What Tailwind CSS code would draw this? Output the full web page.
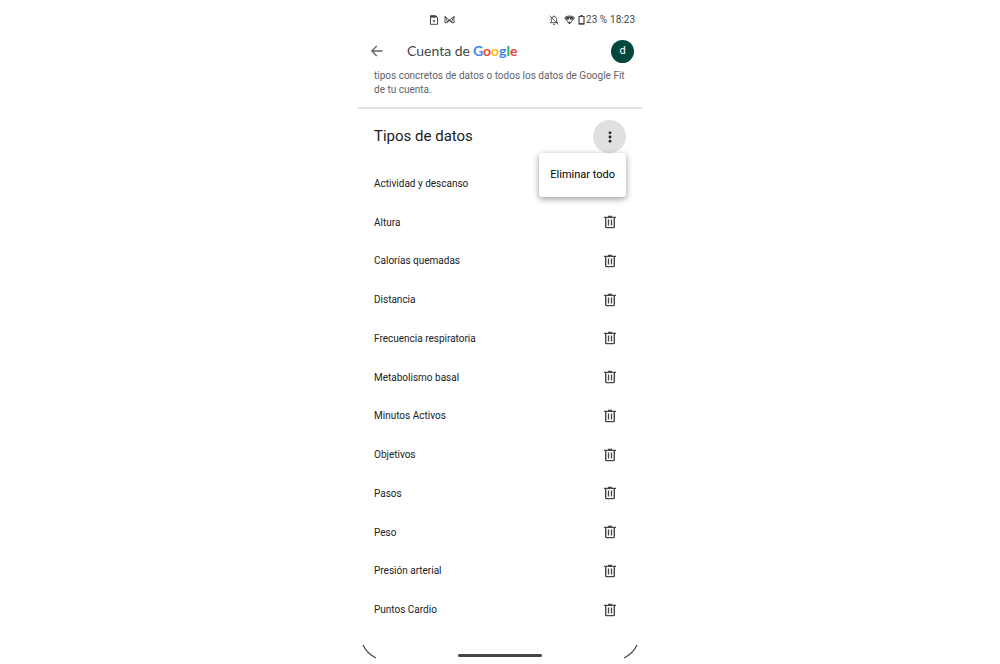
<!DOCTYPE html>
<html lang="es">
<head>
    <meta charset="UTF-8">
    <meta name="viewport" content="width=device-width, initial-scale=1.0">
    <title>Cuenta de Google - Tipos de datos</title>
    <script src="https://cdn.jsdelivr.net/npm/@tailwindcss/browser@4"></script>
</head>
<body class="bg-white font-['Roboto',sans-serif] text-[#202124]">
    <svg class="hidden">
        <symbol id="trash" viewBox="0 0 14 14">
            <path d="M1 2.400h12M5 1.500h4M2.700 2.800v9q0 .8.800.8h7q.8 0 .8-.8v-9" fill="none" stroke="currentColor" stroke-width="1.400"/>
            <path d="M5.500 4.600v6M8.500 4.600v6" fill="none" stroke="currentColor" stroke-width="1.300"/>
        </symbol>
    </svg>

    <div class="flex flex-col w-full max-w-[284px] min-h-screen mx-auto">
        <!-- Status bar -->
        <div class="flex items-center justify-between h-9 pt-1 pl-[71px] pr-[7px] text-[#444746]">
            <div class="flex items-center gap-[5px]">
                <svg class="w-[10px] h-[10px]" viewBox="0 0 10 10" fill="none" stroke="currentColor">
                    <path d="M1.500 .7H6.600L8.500 2.400V9.300H1.500z"/>
                    <path d="M1.500 1.800h6" stroke-width="1.800"/>
                    <path d="M5 4.800v2.400M3.800 6h2.400" stroke-width="1"/>
                </svg>
                <svg class="w-[11px] h-[10px]" viewBox="0 0 11 10" fill="none" stroke="currentColor" stroke-width=".9">
                    <path d="M1 1.500v6.500l2.500-1.500 2-1.800 2 1.800L10 8V1.500L5.500 5.200z"/>
                    <path d="M1 1.500l2.500 5M10 1.500L7.500 6.500M2.500 8L5.500 6l3 2"/>
                </svg>
            </div>
            <div class="flex items-center text-[10px] leading-4">
                <svg class="w-[10px] h-[10px] mr-[5px]" viewBox="0 0 10 10" fill="none" stroke="currentColor" stroke-width=".9">
                    <path d="M2.300 7.500V4.200C2.300 2.600 3.500 1.600 5 1.600s2.700 1 2.700 2.600v3.300M1 7.700h8M5 .5v1M4 9.300h2M.7.700l8.600 8.600"/>
                </svg>
                <svg class="w-[11px] h-[10px] mr-[3px]" viewBox="0 0 11 10">
                    <path d="M.5 2.800C3.300.4 7.700.4 10.500 2.800L5.500 9z" fill="none" stroke="currentColor" stroke-width=".9"/>
                    <path d="M1 2.800C3.500 1 7.500 1 10 2.800L8.500 4.800H2.500z" fill="currentColor"/>
                    <path d="M5.500 3v3M4.200 4.900l1.300 1.300 1.300-1.300" fill="none" stroke="#fff" stroke-width=".8"/>
                    <path d="M4 6.800h3L5.500 9.200z" fill="currentColor"/>
                </svg>
                <svg class="w-[7px] h-[10px] mr-px" viewBox="0 0 7 10" fill="none" stroke="currentColor">
                    <path d="M1 1.500h5v7.500H1z" stroke-width="1.200"/>
                    <path d="M2.300 .8h2.400M1 8.800h5" stroke-width="1.400"/>
                </svg>
                <span>23 %</span>
                <span class="ml-[3px]">18:23</span>
            </div>
        </div>

        <!-- App bar -->
        <header class="flex items-center h-[30px] pl-3 pr-2">
            <button aria-label="Atrás" class="text-[#5f6368]">
                <svg class="w-[14px] h-[14px]" viewBox="0 0 14 14" fill="none" stroke="currentColor" stroke-width="1.300">
                    <path d="M12.500 7H2M6.800 2L1.800 7l5 5"/>
                </svg>
            </button>
            <h1 class="flex items-center gap-[3px] ml-[23px] font-['Lato',sans-serif] text-sm text-[#444746]">
                <span>Cuenta de</span>
                <span class="font-bold"><span class="text-[#4285f4]">G</span><span class="text-[#ea4335]">o</span><span class="text-[#fbbc05]">o</span><span class="text-[#4285f4]">g</span><span class="text-[#34a853]">l</span><span class="text-[#ea4335]">e</span></span>
            </h1>
            <button aria-label="Cuenta" class="w-[23px] h-[23px] ml-auto rounded-full bg-[#00473e] text-white text-[11px]">d</button>
        </header>

        <p class="h-[43px] pt-[3px] px-4 border-b-2 border-[#dfe0e2] text-[10px] leading-[14px] text-[#5f6368]">tipos concretos de datos o todos los datos de Google Fit de tu cuenta.</p>

        <!-- Data types -->
        <div class="relative flex items-center justify-between h-[55px] px-4">
            <h2 class="text-[15px]">Tipos de datos</h2>
            <button aria-label="Más opciones" class="flex items-center justify-center w-[33px] h-[33px] rounded-full bg-[#e0e0e0]">
                <svg class="w-3 h-3" viewBox="0 0 12 12" fill="currentColor">
                    <circle cx="6" cy="1.800" r="1.400"/>
                    <circle cx="6" cy="6" r="1.400"/>
                    <circle cx="6" cy="10.200" r="1.400"/>
                </svg>
            </button>
            <div class="absolute z-10 top-11 right-4 bg-white rounded-[3px] shadow-[0_2px_6px_rgba(0,0,0,0.4)]">
                <button class="h-11 px-[11px] text-[11px] text-black whitespace-nowrap">Eliminar todo</button>
            </div>
        </div>

        <ul class="flex flex-col flex-1 pl-4 pr-[25px] text-[10px]">
            <li class="flex flex-1 items-center justify-between">Actividad y descanso</li>
            <li class="flex flex-1 items-center justify-between">Altura <button aria-label="Eliminar Altura" class="text-[#444746]"><svg class="w-[14px] h-[14px]"><use href="#trash"/></svg></button></li>
            <li class="flex flex-1 items-center justify-between">Calorías quemadas <button aria-label="Eliminar Calorías quemadas" class="text-[#444746]"><svg class="w-[14px] h-[14px]"><use href="#trash"/></svg></button></li>
            <li class="flex flex-1 items-center justify-between">Distancia <button aria-label="Eliminar Distancia" class="text-[#444746]"><svg class="w-[14px] h-[14px]"><use href="#trash"/></svg></button></li>
            <li class="flex flex-1 items-center justify-between">Frecuencia respiratoria <button aria-label="Eliminar Frecuencia respiratoria" class="text-[#444746]"><svg class="w-[14px] h-[14px]"><use href="#trash"/></svg></button></li>
            <li class="flex flex-1 items-center justify-between">Metabolismo basal <button aria-label="Eliminar Metabolismo basal" class="text-[#444746]"><svg class="w-[14px] h-[14px]"><use href="#trash"/></svg></button></li>
            <li class="flex flex-1 items-center justify-between">Minutos Activos <button aria-label="Eliminar Minutos Activos" class="text-[#444746]"><svg class="w-[14px] h-[14px]"><use href="#trash"/></svg></button></li>
            <li class="flex flex-1 items-center justify-between">Objetivos <button aria-label="Eliminar Objetivos" class="text-[#444746]"><svg class="w-[14px] h-[14px]"><use href="#trash"/></svg></button></li>
            <li class="flex flex-1 items-center justify-between">Pasos <button aria-label="Eliminar Pasos" class="text-[#444746]"><svg class="w-[14px] h-[14px]"><use href="#trash"/></svg></button></li>
            <li class="flex flex-1 items-center justify-between">Peso <button aria-label="Eliminar Peso" class="text-[#444746]"><svg class="w-[14px] h-[14px]"><use href="#trash"/></svg></button></li>
            <li class="flex flex-1 items-center justify-between">Presión arterial <button aria-label="Eliminar Presión arterial" class="text-[#444746]"><svg class="w-[14px] h-[14px]"><use href="#trash"/></svg></button></li>
            <li class="flex flex-1 items-center justify-between">Puntos Cardio <button aria-label="Eliminar Puntos Cardio" class="text-[#444746]"><svg class="w-[14px] h-[14px]"><use href="#trash"/></svg></button></li>
        </ul>

        <!-- Screen corners and gesture bar -->
        <div class="flex items-end justify-between h-[35px] px-1 pb-[5px] text-[#444746]">
            <svg class="w-[15px] h-[15px]" viewBox="0 0 15 15" fill="none" stroke="currentColor" stroke-width="1.300"><path d="M1 1Q5 9.500 14 14"/></svg>
            <div class="w-[84px] h-[3px] mb-[2px] rounded-full bg-[#444746]"></div>
            <svg class="w-[15px] h-[15px]" viewBox="0 0 15 15" fill="none" stroke="currentColor" stroke-width="1.300"><path d="M14 1Q10 9.500 1 14"/></svg>
        </div>
    </div>
</body>
</html>
